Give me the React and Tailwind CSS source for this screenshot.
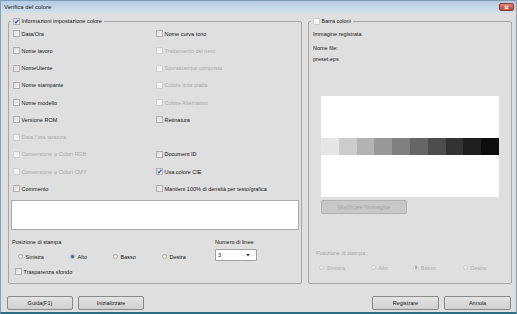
const LEFT_ROWS = [
  [{ label: 'Data/Ora' }, { label: 'Nome curva tono' }],
  [{ label: 'Nome lavoro' }, { label: 'Trattamento del nero', disabled: true }],
  [{ label: 'NomeUtente' }, { label: 'Sovrastampa composta', disabled: true }],
  [{ label: 'Nome stampante' }, { label: 'Colore tinta piatta', disabled: true }],
  [{ label: 'Nome modello' }, { label: 'Colore Alternativo', disabled: true }],
  [{ label: 'Versione ROM' }, { label: 'Retinatura' }],
  [{ label: 'Data / ora taratura', disabled: true }, null],
  [{ label: 'Conversione a Colori RGB', disabled: true }, { label: 'Document ID' }],
  [{ label: 'Conversione a Colori CMY', disabled: true }, { label: 'Usa colore CIE', checked: true }],
  [{ label: 'Commento' }, { label: 'Mantieni 100% di densità per testo/grafica' }],
];

const GRAYS = ['#e6e6e6', '#cccccc', '#b3b3b3', '#999999', '#808080', '#666666', '#4d4d4d', '#333333', '#1f1f1f', '#0d0d0d'];

function Check({ checked, disabled }) {
  return (
    <span
      className={
        'w-[7px] h-[7px] shrink-0 border flex items-center justify-center ' +
        (disabled ? 'border-[#d0d0d0] bg-[#f3f3f3]' : 'border-[#b0b0b0] bg-gradient-to-br from-[#d9d9d9] to-[#f7f7f7]')
      }
    >
      {checked && (
        <svg width="5" height="5" viewBox="0 0 5 5">
          <path d="M0.8 2.6 L2 3.9 L4.3 0.8" fill="none" stroke="#2d4fa6" strokeWidth="1.1" />
        </svg>
      )}
    </span>
  );
}

function CheckRow({ label, checked, disabled, boxDisabled }) {
  return (
    <div className="flex items-center gap-[1.5px] whitespace-nowrap">
      <Check checked={checked} disabled={disabled || boxDisabled} />
      <span className={disabled ? 'text-[#ababab]' : 'text-[#141414]'}>{label}</span>
    </div>
  );
}

function Radio({ label, checked, disabled, width }) {
  return (
    <div className="flex items-center gap-[2.5px] whitespace-nowrap" style={{ width }}>
      <span
        className={
          'w-[5px] h-[5px] rounded-full border flex items-center justify-center ' +
          (disabled ? 'border-[#cacaca] bg-[#ededed]' : 'border-[#b0b0b0] bg-[#f2f2f2]')
        }
      >
        {checked && (
          <span className={'w-[2.5px] h-[2.5px] rounded-full ' + (disabled ? 'bg-[#a9a9a9]' : 'bg-[#2e58a8]')} />
        )}
      </span>
      <span className={disabled ? 'text-[#b0b0b0]' : 'text-[#141414]'}>{label}</span>
    </div>
  );
}

function Button({ children, disabled, className = '' }) {
  return (
    <div
      className={
        'h-[14px] flex items-center justify-center rounded-[2px] border ' +
        (disabled
          ? 'border-[#b2b2b2] bg-[#c8c8c8] text-[#a3a3a3] '
          : 'border-[#8a8a8a] bg-gradient-to-b from-[#e4e4e4] to-[#cfcfcf] text-[#141414] ') +
        className
      }
    >
      {children}
    </div>
  );
}

export default function App() {
  return (
    <div
      className="w-[517px] h-[314px] bg-[#dfdfdf] border-l border-r border-b-2 border-l-[#8aa0b2] border-r-[#8aa0b2] border-b-[#2f6d83] flex flex-col text-[5.5px] leading-[8px] overflow-hidden"
      style={{ fontFamily: '"Liberation Sans", Arial, sans-serif' }}
    >
      {/* Title bar */}
      <div className="h-[13px] shrink-0 flex items-center justify-between pl-[3px] pr-[2px] bg-gradient-to-b from-[#b3cbe2] to-[#d3e1ee] border-t border-[#7f9db8]">
        <span className="text-[#1c1c1c] text-[6px]">Verifica del colore</span>
        <span className="w-[15px] h-[8px] rounded-[2px] border border-[#8d3c34] bg-gradient-to-b from-[#e0857c] to-[#c2432f] flex items-center justify-center">
          <svg width="5" height="5" viewBox="0 0 5 5">
            <path d="M0.8 0.8 L4.2 4.2 M4.2 0.8 L0.8 4.2" stroke="#fff" strokeWidth="1.2" />
          </svg>
        </span>
      </div>

      {/* Group boxes */}
      <div className="flex gap-[6px] pl-[7px] pt-[4px] h-[271px] shrink-0">
        <fieldset className="w-[294px] h-[267px] border border-[#a7a7a7] rounded-[2px] px-[2px]">
          <legend className="px-[2px] h-[8px]">
            <CheckRow label="Informazioni impostazione colore" checked />
          </legend>
          <div className="grid grid-cols-[143px_1fr] pl-[2px]">
            {LEFT_ROWS.map((row, i) => (
              <div key={i} className="contents">
                <div className="h-[17.25px] flex items-center">{row[0] && <CheckRow {...row[0]} />}</div>
                <div className="h-[17.25px] flex items-center">{row[1] && <CheckRow {...row[1]} />}</div>
              </div>
            ))}
          </div>
          <div className="mt-[2.5px] h-[30px] bg-white border border-[#a9a9a9]" />
          <div className="flex mt-[7.7px]">
            <div className="w-[204px] flex flex-col">
              <div className="pl-[1px] h-[8px] text-[#141414]">Posizione di stampa</div>
              <div className="flex mt-[7px] h-[8px] items-center pl-[7px]">
                <Radio label="Sinistra" width={52} />
                <Radio label="Alto" checked width={43} />
                <Radio label="Basso" width={49} />
                <Radio label="Destra" width={40} />
              </div>
              <div className="mt-[7px] h-[8px] flex items-center pl-[4px]">
                <CheckRow label="Trasparenza sfondo" />
              </div>
            </div>
            <div className="flex flex-col">
              <div className="h-[8px] text-[#141414]">Numero di linee</div>
              <div className="mt-[3.6px] w-[42px] h-[12px] bg-white border border-[#a3a3a3] rounded-[1px] flex items-center justify-between pl-[2px] pr-[6px]">
                <span className="text-[#141414]">3</span>
                <svg width="4" height="3" viewBox="0 0 4 3">
                  <path d="M0 0 L4 0 L2 2.5 Z" fill="#444" />
                </svg>
              </div>
            </div>
          </div>
        </fieldset>

        <fieldset className="w-[204px] h-[267px] border border-[#a7a7a7] rounded-[2px] px-[2px]">
          <legend className="px-[2px] h-[8px]">
            <CheckRow label="Barra coloni" boxDisabled />
          </legend>
          <div className="pl-[2px] flex flex-col text-[#141414]">
            <div className="mt-[5px] h-[8px]">Immagine registrata</div>
            <div className="mt-[6.3px] h-[8px]">Nome file:</div>
            <div className="mt-[3px] h-[8px]">preset.eps</div>
          </div>
          <div className="ml-[10px] mt-[32.7px] w-[178px] h-[101px] bg-white flex flex-col">
            <div className="mt-[42.3px] h-[16.7px] flex">
              {GRAYS.map((c) => (
                <div key={c} className="flex-1" style={{ backgroundColor: c }} />
              ))}
            </div>
          </div>
          <Button disabled className="ml-[10px] mt-[2.7px] w-[86px] h-[13px]">
            Modificare l'immagine
          </Button>
          <div className="pl-[5px] mt-[35.4px] h-[8px] text-[#a8a8a8]">Posizione di stampa</div>
          <div className="flex mt-[6.6px] h-[8px] items-center pl-[8.3px]">
            <Radio label="Sinistra" disabled width={51.4} />
            <Radio label="Alto" disabled width={42.6} />
            <Radio label="Basso" checked disabled width={49.4} />
            <Radio label="Destra" disabled width={40} />
          </div>
        </fieldset>
      </div>

      {/* Buttons */}
      <div className="flex justify-between pl-[6px] pr-[5px] mt-[12px]">
        <div className="flex gap-[5px]">
          <Button className="w-[66px]">Guida(F1)</Button>
          <Button className="w-[66px]">Inizializzare</Button>
        </div>
        <div className="flex gap-[5px]">
          <Button className="w-[67px]">Registrare</Button>
          <Button className="w-[67px]">Annula</Button>
        </div>
      </div>
    </div>
  );
}
